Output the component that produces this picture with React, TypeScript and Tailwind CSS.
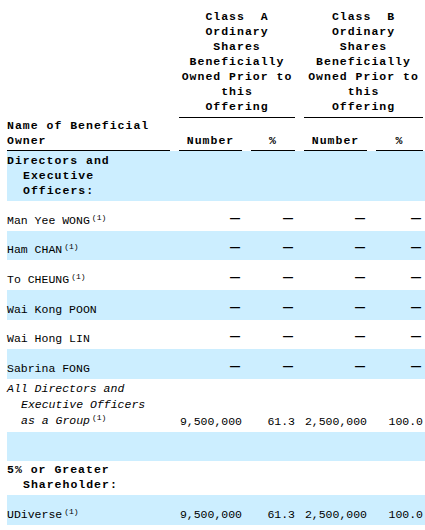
import type { ReactNode } from "react";

const COLS = "grid grid-cols-[163px_63px_44px_63px_47px] gap-x-[9px]";

type Row = {
  name: ReactNode;
  values?: string[];
  cls: string; // full row classes (height + background)
};

const DASH = ["—", "—", "—", "—"];

function Note() {
  return <sup className="ml-[2px] text-[8px] font-normal not-italic tracking-normal">(1)</sup>;
}

const ROWS: Row[] = [
  {
    name: (
      <div className="pl-[16px] -indent-[16px] font-bold tracking-[1px]">
        Directors and<br />Executive<br />Officers:
      </div>
    ),
    cls: "h-[50px] bg-[#cceeff]",
  },
  { name: <>Man Yee WONG<Note /></>, values: DASH, cls: "h-[30px]" },
  { name: <>Ham CHAN<Note /></>, values: DASH, cls: "h-[29px] bg-[#cceeff]" },
  { name: <>To CHEUNG<Note /></>, values: DASH, cls: "h-[30px]" },
  { name: "Wai Kong POON", values: DASH, cls: "h-[30px] bg-[#cceeff]" },
  { name: "Wai Hong LIN", values: DASH, cls: "h-[29px]" },
  { name: "Sabrina FONG", values: DASH, cls: "h-[30px] bg-[#cceeff]" },
  {
    name: (
      <div className="pl-[14px] -indent-[14px] italic leading-[16px]">
        All Directors and<br />Executive Officers<br />as a Group<Note />
      </div>
    ),
    values: ["9,500,000", "61.3", "2,500,000", "100.0"],
    cls: "h-[53px]",
  },
  { name: "", cls: "h-[29px] bg-[#cceeff]" },
  {
    name: (
      <div className="pl-[16px] -indent-[16px] font-bold tracking-[1px]">
        5% or Greater<br />Shareholder:
      </div>
    ),
    cls: "h-[34px]",
  },
  {
    name: <>UDiverse<Note /></>,
    values: ["9,500,000", "61.3", "2,500,000", "100.0"],
    cls: "h-[30px] bg-[#cceeff]",
  },
];

function Cell({ v }: { v: string }) {
  if (v === "—") {
    return (
      <div className="pr-[2px] text-right">
        <span className="relative top-[-2px] font-['Liberation_Sans',sans-serif] text-[10px] font-bold">—</span>
      </div>
    );
  }
  return <div className="text-right whitespace-pre">{v}</div>;
}

export default function App() {
  return (
    <div className="min-h-[530px] w-[425px] bg-white font-['Liberation_Mono','DejaVu_Sans_Mono',monospace] text-[11.5px] leading-[15px] text-black">
      <div className="ml-[7px]">
        {/* Header */}
        <div className={`${COLS} font-bold tracking-[1px]`}>
          <div className="row-span-2 self-end border-b border-black pb-[2px]">
            Name of Beneficial<br />Owner
          </div>
          <div className="col-span-2 border-b border-black pt-[9px] pb-[3px] text-center">
            {"Class\u00a0\u00a0A"}<br />Ordinary<br />Shares<br />Beneficially<br />Owned Prior to<br />this<br />Offering
          </div>
          <div className="col-span-2 border-b border-black pt-[9px] pb-[3px] text-center">
            {"Class\u00a0\u00a0B"}<br />Ordinary<br />Shares<br />Beneficially<br />Owned Prior to<br />this<br />Offering
          </div>
          <div className="border-b border-black pt-[15px] pb-[2px] text-center">Number</div>
          <div className="border-b border-black pt-[15px] pb-[2px] text-center">%</div>
          <div className="border-b border-black pt-[15px] pb-[2px] text-center">Number</div>
          <div className="border-b border-black pt-[15px] pb-[2px] text-center">%</div>
        </div>

        {/* Body */}
        {ROWS.map((r, i) => (
          <div key={i} className={`${COLS} items-end pb-[3px] ${r.cls}`}>
            <div>{r.name}</div>
            {r.values?.map((v, j) => <Cell key={j} v={v} />)}
          </div>
        ))}
      </div>
    </div>
  );
}
